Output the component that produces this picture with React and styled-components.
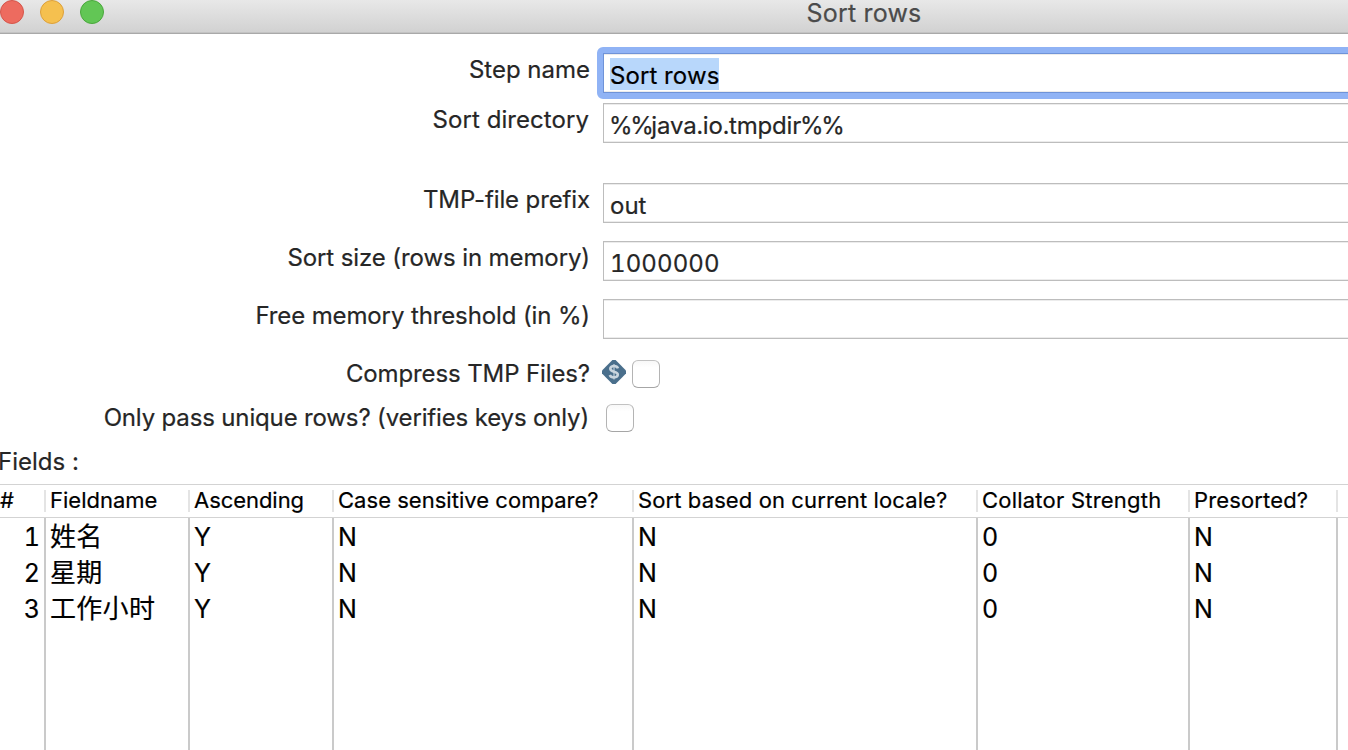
import React from "react";
import styled, { createGlobalStyle } from "styled-components";

const GlobalStyle = createGlobalStyle`
  * { box-sizing: border-box; }
  body {
    margin: 0;
    background: #fff;
    overflow: hidden;
    font-family: Inter, "Noto Sans CJK SC", sans-serif;
    font-size: 24px;
    color: #262626;
    -webkit-text-stroke: 0.2px currentColor;
  }
`;

const Window = styled.div`
  display: flex;
  flex-direction: column;
  width: 1348px;
  height: 750px;
  overflow: hidden;
  background: #fff;
`;

const TitleBar = styled.header`
  display: grid;
  grid-template-columns: 380px 968px;
  flex: none;
  height: 34px;
  background: linear-gradient(#e8e8e8, #d1d1d1);
  border-bottom: 1px solid #a9a9a9;
  box-shadow: inset 0 -1px #c3c3c3;
`;

const Lights = styled.div`
  display: flex;
  gap: 16px;
`;

const Light = styled.span`
  width: 24px;
  height: 24px;
  border-radius: 50%;
  background: ${(p) => p.$fill};
  border: 1px solid ${(p) => p.$edge};
`;

const Title = styled.h1`
  margin: 0;
  text-align: center;
  font-size: 25px;
  font-weight: 400;
  line-height: 26px;
  color: #4b4b4b;
  letter-spacing: 0.2px;
`;

const Form = styled.form`
  flex: none;
  padding-top: 19px;
`;

const FormRow = styled.div`
  display: grid;
  grid-template-columns: 589px 1fr;
  column-gap: ${(p) => p.$gap ?? 14}px;
  height: ${(p) => p.$height}px;
`;

const Label = styled.label`
  justify-self: end;
  white-space: nowrap;
  line-height: 34px;
  height: 34px;
  margin-right: ${(p) => p.$shift || 0}px;
  letter-spacing: ${(p) => p.$track || 0}px;
`;

const Field = styled.div`
  position: relative;
  width: 760px;
  height: 40px;
  padding: 4px 6px 0;
  border: 1px solid ${(p) => (p.$focused ? "#6f93d8" : "#bdbdbd")};
  background: #fff;
  box-shadow: inset 0 1px #ececec, inset 0 -1px #ececec;

  &::before {
    content: "";
    display: ${(p) => (p.$focused ? "block" : "none")};
    position: absolute;
    inset: -7px;
    border: 6px solid #90b3f5;
    border-radius: 6px;
  }
`;

const Value = styled.span`
  display: inline-block;
  height: 32px;
  line-height: 35px;
  white-space: pre;
  vertical-align: top;
  letter-spacing: ${(p) => p.$track || 0}px;
  font-variant-numeric: tabular-nums;
  color: ${(p) => (p.$selected ? "#000" : "#262626")};
  background: ${(p) => (p.$selected ? "#b8d7fb" : "transparent")};
`;

const Marks = styled.span`
  letter-spacing: -2.4px;
  margin-left: -1px;
`;

const Toggle = styled.div`
  display: flex;
  align-items: flex-start;
  gap: 6px;
  padding-top: 3px;
`;

const CheckBox = styled.span`
  width: 28px;
  height: 28px;
  border: 1px solid #b4b4b4;
  border-top-color: #c2c2c2;
  border-bottom-color: #a6a6a6;
  border-radius: 6px;
  background: linear-gradient(#f8f8f8, #fff 25%);
`;

const SectionLabel = styled.div`
  height: 40px;
  line-height: 36px;
  margin-left: -2px;
`;

const Table = styled.div`
  display: flex;
  flex-direction: column;
  flex: 1;
  color: #000;
`;

const COLUMNS = "46px 144px 144px 300px 344px 212px 148px";

const HeadRow = styled.div`
  display: grid;
  grid-template-columns: ${COLUMNS};
  align-items: center;
  height: 34px;
  border-top: 1px solid #d3d3d3;
  border-bottom: 1px solid #d3d3d3;
`;

const HeadCell = styled.div`
  height: 22px;
  padding-left: ${(p) => p.$indent ?? 4}px;
  border-right: 2px solid #e4e4e4;
  font-size: 22px;
  line-height: 20px;
  white-space: nowrap;
  letter-spacing: ${(p) => p.$track || 0}px;
`;

const Body = styled.div`
  display: grid;
  flex: 1;
  grid-template-columns: ${COLUMNS};
`;

const Column = styled.div`
  padding: 1px 4px 0 4px;
  border-right: 2px solid #cacaca;
  text-align: ${(p) => (p.$right ? "right" : "left")};
`;

const Cell = styled.div`
  height: 36px;
  line-height: 36px;
  font-size: ${(p) => (p.$cjk ? 26 : 25)}px;
  letter-spacing: ${(p) => (p.$cjk ? 0.3 : 0)}px;
  font-variant-numeric: tabular-nums;
  white-space: nowrap;
`;

function VariableIcon() {
  return (
    <svg width="24" height="24" viewBox="0 0 24 24" aria-hidden="true">
      <path d="M10.4 0h3.2L24 10.4v3.2L13.6 24h-3.2L0 13.6v-3.2z" fill="#4a6f8c" />
      <path d="M12 4V19.5" stroke="#8fa7b9" strokeWidth="2" />
      <path
        d="M16 8.4C15.4 6.8 13.8 6 12 6C9.8 6 8.3 7 8.3 8.8C8.3 12.6 15.8 10.8 15.8 14.6C15.8 16.5 14.2 17.4 12 17.4C10 17.4 8.5 16.7 7.8 15"
        fill="none"
        stroke="#c9d5de"
        strokeWidth="2.6"
      />
    </svg>
  );
}

const fields = [
  { label: "Step name", value: "Sort rows", height: 50, focused: true, shift: -1, valueTrack: 0.12 },
  {
    label: "Sort directory",
    value: (
      <>
        <Marks>%%</Marks>java.io.tmpdir<Marks>%%</Marks>
      </>
    ),
    height: 80,
    track: 0.06,
    shift: 0,
    valueTrack: -0.16,
  },
  { label: "TMP-file prefix", value: "out", height: 58, track: -0.12, shift: -1 },
  { label: "Sort size (rows in memory)", value: "1000000", height: 58, track: -0.1, shift: -1, valueTrack: 0.1 },
  { label: "Free memory threshold (in %)", value: "", height: 58, track: -0.12, shift: -1 },
];

const columns = [
  { head: "#", cells: ["1", "2", "3"], right: true, indent: 0 },
  { head: "Fieldname", cells: ["姓名", "星期", "工作小时"], cjk: true },
  { head: "Ascending", cells: ["Y", "Y", "Y"], track: -0.05 },
  { head: "Case sensitive compare?", cells: ["N", "N", "N"], track: 0.03 },
  { head: "Sort based on current locale?", cells: ["N", "N", "N"], track: 0.11 },
  { head: "Collator Strength", cells: ["0", "0", "0"], track: 0.22 },
  { head: "Presorted?", cells: ["N", "N", "N"], track: 0.15 },
];

export default function App() {
  return (
    <Window>
      <GlobalStyle />
      <TitleBar>
        <Lights>
          <Light $fill="#ed6b5f" $edge="#d5554a" />
          <Light $fill="#f5c04f" $edge="#dda03a" />
          <Light $fill="#62c655" $edge="#4aa73c" />
        </Lights>
        <Title>Sort rows</Title>
      </TitleBar>
      <Form>
        {fields.map((f) => (
          <FormRow key={f.label} $height={f.height}>
            <Label $track={f.track} $shift={f.shift}>{f.label}</Label>
            <Field $focused={f.focused}>
              <Value $selected={f.focused} $track={f.valueTrack}>{f.value}</Value>
            </Field>
          </FormRow>
        ))}
        <FormRow $height={44} $gap={13}>
          <Label $track={-0.12} $shift={-1}>Compress TMP Files?</Label>
          <Toggle>
            <VariableIcon />
            <CheckBox />
          </Toggle>
        </FormRow>
        <FormRow $height={43} $gap={17}>
          <Label $track={-0.15}>Only pass unique rows? (verifies keys only)</Label>
          <Toggle>
            <CheckBox />
          </Toggle>
        </FormRow>
      </Form>
      <SectionLabel>Fields :</SectionLabel>
      <Table>
        <HeadRow>
          {columns.map((c) => (
            <HeadCell key={c.head} $indent={c.indent} $track={c.track}>{c.head}</HeadCell>
          ))}
        </HeadRow>
        <Body>
          {columns.map((c) => (
            <Column key={c.head} $right={c.right}>
              {c.cells.map((text, i) => (
                <Cell key={i} $cjk={c.cjk}>{text}</Cell>
              ))}
            </Column>
          ))}
        </Body>
      </Table>
    </Window>
  );
}
